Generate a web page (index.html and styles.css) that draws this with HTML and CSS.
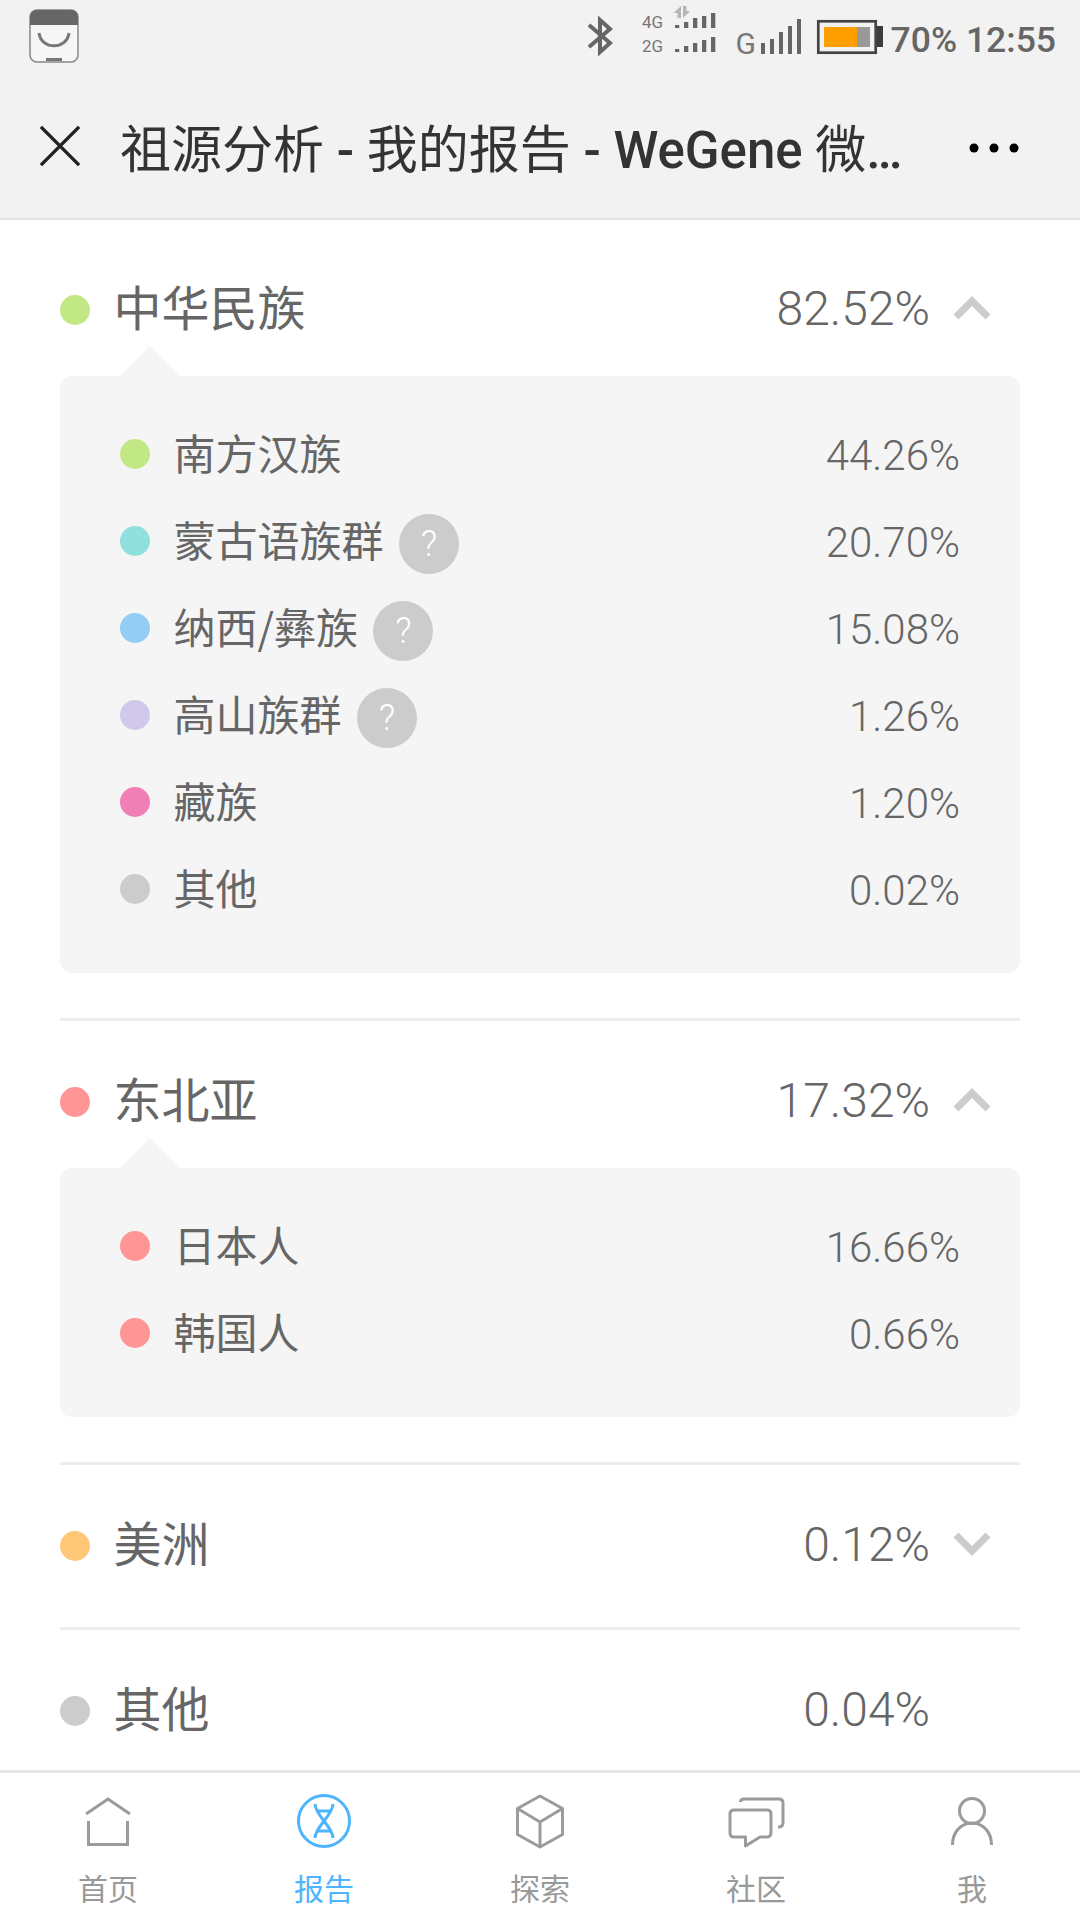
FILE: index.html
```html
<!DOCTYPE html>
<html lang="zh">
<head>
<meta charset="utf-8">
<title>祖源分析</title>
<link rel="stylesheet" href="styles.css">
</head>
<body>
<div class="app">
  <header class="top">
    <div class="status">
      <svg class="app-icon" viewBox="0 0 50 54"><rect x="1" y="1" width="48" height="52" rx="7" fill="#f6f6f6" stroke="#888" stroke-width="1.5"/><path d="M1 16V8a7 7 0 0 1 7-7h34a7 7 0 0 1 7 7v8z" fill="#666"/><path d="M10 24c2 17 28 17 30 0" fill="none" stroke="#777" stroke-width="3"/><rect x="17" y="49" width="16" height="3" fill="#777"/></svg>
      <div class="status-right">
        <svg class="status-icons" viewBox="585 0 300 70">
          <path d="M588 25l21 18-10 9V20l10 9-21 18" fill="none" stroke="#666" stroke-width="4"/>
          <text x="641" y="28" class="net-text">4G</text>
          <text x="641" y="52" class="net-text">2G</text>
          <path d="M680 6v12h-3.500v-5h-4zM682 6h3.500v5h3.500l-7 7z" fill="#b5b5b5"/>
          <g fill="#666">
            <rect x="674" y="25" width="4.300" height="3"/><rect x="683" y="22" width="4.300" height="6"/><rect x="692" y="18" width="4.300" height="10"/><rect x="701" y="16" width="4.300" height="12"/><rect x="710" y="13" width="4.300" height="15"/>
            <rect x="674" y="49" width="4.300" height="3"/><rect x="683" y="46" width="4.300" height="6"/><rect x="692" y="43" width="4.300" height="9"/><rect x="701" y="40" width="4.300" height="12"/><rect x="710" y="37" width="4.300" height="15"/>
            <rect x="760" y="43" width="4" height="11"/><rect x="769" y="39" width="4" height="15"/><rect x="778" y="32" width="4" height="22"/><rect x="787" y="26" width="4" height="28"/><rect x="796" y="19" width="4" height="35"/>
          </g>
          <text x="734.500" y="54" class="g-text">G</text>
          <rect x="817.300" y="21.300" width="57.400" height="31.400" fill="none" stroke="#444" stroke-width="2.700"/>
          <rect x="823" y="27" width="33" height="20" fill="#ff9e00"/>
          <rect x="856" y="27" width="13" height="20" fill="#999"/>
          <rect x="876" y="26" width="6" height="21" fill="#3c3c3c"/>
        </svg>
        <span class="status-text">70% 12:55</span>
      </div>
    </div>
    <div class="toolbar">
      <svg class="close" viewBox="0 0 44 44"><path d="M2 2l40 40M42 2L2 42" stroke="#222" stroke-width="3.6" fill="none"/></svg>
      <h1 class="title"><span class="cjk">祖源分析</span> - <span class="cjk">我的报告</span> - WeGene <span class="cjk">微基因</span></h1>
      <svg class="more" viewBox="0 0 50 10"><circle cx="5" cy="5" r="4.5"/><circle cx="25" cy="5" r="4.5"/><circle cx="45" cy="5" r="4.5"/></svg>
    </div>
  </header>

  <main class="content">
    <section class="group first">
      <div class="head">
        <i class="dot green"></i><span class="name">中华民族</span><span class="pct">82.52%</span>
        <svg class="chev" viewBox="0 0 38 24"><path d="M3 21L19 5l16 16"/></svg>
      </div>
      <div class="card">
        <div class="row"><i class="dot green"></i><span class="label">南方汉族</span><span class="val">44.26%</span></div>
        <div class="row"><i class="dot teal"></i><span class="label">蒙古语族群</span><b class="q">?</b><span class="val">20.70%</span></div>
        <div class="row"><i class="dot blue"></i><span class="label">纳西/彝族</span><b class="q">?</b><span class="val">15.08%</span></div>
        <div class="row"><i class="dot purple"></i><span class="label">高山族群</span><b class="q">?</b><span class="val">1.26%</span></div>
        <div class="row"><i class="dot pink"></i><span class="label">藏族</span><span class="val">1.20%</span></div>
        <div class="row"><i class="dot gray"></i><span class="label">其他</span><span class="val">0.02%</span></div>
      </div>
    </section>
    <section class="group">
      <div class="head">
        <i class="dot red"></i><span class="name">东北亚</span><span class="pct">17.32%</span>
        <svg class="chev" viewBox="0 0 38 24"><path d="M3 21L19 5l16 16"/></svg>
      </div>
      <div class="card">
        <div class="row"><i class="dot red"></i><span class="label">日本人</span><span class="val">16.66%</span></div>
        <div class="row"><i class="dot red"></i><span class="label">韩国人</span><span class="val">0.66%</span></div>
      </div>
    </section>
    <section class="group closed">
      <div class="head">
        <i class="dot orange"></i><span class="name">美洲</span><span class="pct">0.12%</span>
        <svg class="chev" viewBox="0 0 38 24"><path d="M3 3l16 16L35 3"/></svg>
      </div>
    </section>
    <section class="group closed last">
      <div class="head">
        <i class="dot gray"></i><span class="name">其他</span><span class="pct">0.04%</span>
        <span class="chev"></span>
      </div>
    </section>
  </main>

  <nav class="tabs">
    <div class="tab">
      <svg viewBox="0 0 60 60"><path d="M8 23L30 8l22 15M10.500 30v23.500h39V30"/></svg>
      <span>首页</span>
    </div>
    <div class="tab active">
      <svg viewBox="0 0 60 60"><circle cx="30" cy="30" r="25.500"/><path d="M21 13c0 11 18 23 18 34M39 13c0 11-18 23-18 34M22 20h16M22 40h16"/></svg>
      <span>报告</span>
    </div>
    <div class="tab">
      <svg viewBox="0 0 60 60"><path d="M30 5l22.500 12.500v26L30 56 7.500 43.500v-26zM7.500 17.500L30 31l22.500-13.500M30 31v25" stroke-linejoin="round"/></svg>
      <span>探索</span>
    </div>
    <div class="tab">
      <svg viewBox="0 0 60 60"><path d="M14.500 11q0-3 3.500-3h35q4 0 4 4v20q0 4-5 4"/><path d="M8 19h33q4 0 4 4v18q0 5-4 5h-7l-14.500 9v-9H8q-4 0-4-4V23q0-4 4-4z" stroke-linejoin="round"/></svg>
      <span>社区</span>
    </div>
    <div class="tab">
      <svg viewBox="0 0 60 60"><circle cx="30" cy="20" r="12.500"/><path d="M10.500 54c0-13 8.500-22 19.500-22s19.500 9 19.500 22"/></svg>
      <span>我</span>
    </div>
  </nav>
</div>
</body>
</html>
```

FILE: styles.css
```css
* { box-sizing: border-box; margin: 0; padding: 0; }
html, body { width: 1080px; height: 1920px; overflow: hidden; background: #fff; }
body { font-family: "Noto Sans CJK SC", Roboto, sans-serif; color: #666; }

.app { display: flex; flex-direction: column; height: 1920px; }

.top { flex: none; height: 220px; background: #f2f2f2; border-bottom: 2px solid #e2e2e2; }
.status { height: 70px; display: flex; align-items: flex-start; justify-content: space-between; padding: 9px 24px 0 29px; }
.app-icon { width: 50px; height: 54px; display: block; }
.status-right { display: flex; align-items: flex-start; margin-top: -9px; }
.status-icons { width: 300px; height: 70px; display: block; }
.net-text { font: 400 17px Roboto, sans-serif; fill: #777; }
.g-text { font: 400 30px Roboto, sans-serif; fill: #777; }
.status-text { font: 500 35.500px/80px Roboto, sans-serif; color: #666; margin-left: 5px; white-space: nowrap; }

.toolbar { height: 148px; display: flex; align-items: center; padding: 8px 61px 0 39px; }
.close { width: 42px; height: 42px; flex: none; display: block; margin-top: -4px; }
.title { flex: none; width: 785px; margin: 5px 0 0 39px; font-family: Roboto, "Noto Sans CJK SC", sans-serif; font-size: 51px; line-height: 70px; color: #333; font-weight: 500; white-space: pre; overflow: hidden; text-overflow: ellipsis; }
.cjk { font-weight: 400; }
.more { width: 50px; height: 10px; flex: none; fill: #000; margin-left: auto; }

.content { flex: 1; min-height: 0; overflow: hidden; padding: 8px 60px 0; }

.group { border-bottom: 3px solid #ebeef1; padding-bottom: 45px; margin-bottom: -1px; }
.group.closed { padding-bottom: 15px; }
.group.last { border-bottom: none; }

.head { display: flex; align-items: center; height: 148px; padding: 58px 29px 42px 0; }
.dot { flex: none; display: block; width: 30px; height: 30px; border-radius: 50%; }
.name { margin: -10px 0 0 23.500px; font-size: 48px; line-height: 48px; }
.pct { margin: -2px 0 0 auto; font: 300 48px/48px Roboto, sans-serif; }
.chev { flex: none; display: block; width: 38px; height: 24px; margin: -4px 0 0 23px; fill: none; stroke: #ccc; stroke-width: 7; }

.card { position: relative; background: #f5f5f5; border-radius: 12px; padding: 34px 60px 41px 60px; }
.card::before { content: ""; position: absolute; left: 60px; top: -30px; border: 30px solid transparent; border-top: 0; border-bottom-color: #f5f5f5; }

.row { display: flex; align-items: center; height: 87px; }
.label { margin: -3px 0 0 23.500px; font-size: 42px; line-height: 60px; }
.val { margin: 4px 0 0 auto; font: 300 42px/60px Roboto, sans-serif; }
.q { flex: none; width: 60px; height: 60px; margin: 6px 0 0 15.500px; border-radius: 50%; background: #ccc; color: #fff; text-align: center; font: 300 36px/60px Roboto, sans-serif; }

.green { background: #c2e885; }
.teal { background: #90e0de; }
.blue { background: #94cdf4; }
.purple { background: #d2c8ec; }
.pink { background: #f07fb5; }
.gray { background: #ccc; }
.red { background: #ff9595; }
.orange { background: #ffc878; }

.tabs { flex: none; height: 150px; display: flex; background: #fff; border-top: 3px solid #e3e6e9; }
.tab { flex: 1; display: flex; flex-direction: column; align-items: center; padding-top: 18px; color: #999; }
.tab svg { width: 60px; height: 60px; display: block; fill: none; stroke: #9b9b9b; stroke-width: 3; }
.tab span { font-size: 30px; line-height: 42px; margin-top: 15px; }
.tab.active { color: #4db4ff; }
.tab.active svg { stroke: #4db4ff; }
```
